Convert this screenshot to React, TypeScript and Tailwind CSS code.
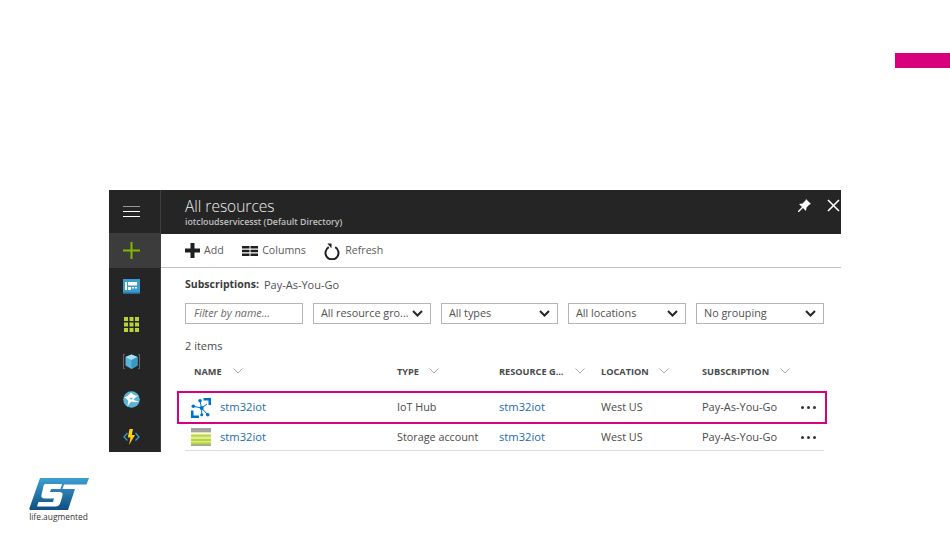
const rows = [
  { type: "IoT Hub", icon: "hub" },
  { type: "Storage account", icon: "storage" },
];

function Chevron() {
  return (
    <svg width="11" height="7" viewBox="0 0 11 7" className="shrink-0" fill="none" stroke="#262626" strokeWidth="2">
      <path d="M1 1l4.5 4.5L10 1" />
    </svg>
  );
}

function HeadArrow() {
  return (
    <svg width="10" height="6" viewBox="0 0 10 6" fill="none" stroke="#a0a0a0" strokeWidth="0.9">
      <path d="M0.5 0.5L5 5l4.500-4.500" />
    </svg>
  );
}

function Select({ label, width }: { label: string; width: string }) {
  return (
    <div className={`flex h-[21px] items-center justify-between border border-[#b4b4b4] pl-[7px] pr-[7px] text-[10.8px] text-[#4f4f4f] ${width}`}>
      <span className="whitespace-nowrap">{label}</span>
      <Chevron />
    </div>
  );
}

function HubIcon() {
  return (
    <svg width="20" height="20" viewBox="0 0 20 20">
      <path d="M12.500 0H20v7h-2.500V2.500h-5zM0 12.500h2.500V17.500H8V20H0z" fill="#0072c6" />
      <path d="M9 2.700l1.500 7.300M2.300 8.300l8.200 1.700M16 6l-5.500 4M16.700 16.700l-6.200-6.700M10.700 16.700V10" stroke="#0072c6" strokeWidth="1" />
      <g fill="#0072c6">
        <circle cx="9" cy="2.700" r="1.800" />
        <circle cx="2.300" cy="8.300" r="1.800" />
        <circle cx="10.700" cy="10" r="2" />
        <circle cx="16.700" cy="16.700" r="1.800" />
        <circle cx="10.700" cy="16.700" r="1.500" />
      </g>
    </svg>
  );
}

function StorageIcon() {
  return (
    <svg width="20" height="18" viewBox="0 0 20 18">
      <rect width="20" height="18" fill="#a3a3a3" />
      <rect y="4" width="20" height="12.500" fill="#b8d432" />
      <rect y="4.500" width="20" height="2" fill="#ffffff" />
      <rect y="8.500" width="20" height="2.500" fill="#dcea9c" />
      <rect y="13" width="20" height="1.500" fill="#dcea9c" />
    </svg>
  );
}

function Row({ type, icon, last }: { type: string; icon: string; last?: boolean }) {
  return (
    <div className={`grid h-[29px] grid-cols-[212px_102px_102px_101px_98px_1fr] items-center text-[10.8px] text-[#4a4a4a] ${last ? "border-b border-[#dcdcdc] pt-[2px]" : ""}`}>
      <div className="flex items-center gap-[9px] pl-[6px]">
        <span className="flex w-[20px] justify-center">{icon === "hub" ? <HubIcon /> : <StorageIcon />}</span>
        <span className="text-[11.2px] font-medium text-[#1a6bb5]">stm32iot</span>
      </div>
      <span className="whitespace-nowrap">{type}</span>
      <span className="text-[11.2px] font-medium text-[#1a6bb5]">stm32iot</span>
      <span>West US</span>
      <span className="whitespace-nowrap text-[11px]">Pay-As-You-Go</span>
      <span className="flex justify-end gap-[3px] pr-[8px]">
        <i className="h-[3px] w-[3px] rounded-full bg-[#333]" />
        <i className="h-[3px] w-[3px] rounded-full bg-[#333]" />
        <i className="h-[3px] w-[3px] rounded-full bg-[#333]" />
      </span>
    </div>
  );
}

function Sidebar() {
  return (
    <div className="flex w-[52px] shrink-0 flex-col border-r border-[#3e3e3e] bg-[#252525]">
      <div className="flex h-[43px] shrink-0 flex-col items-center justify-center gap-[3.7px] pr-[6px]">
        <i className="h-px w-[17px] bg-[#999]" />
        <i className="h-px w-[17px] bg-white" />
        <i className="h-px w-[17px] bg-white" />
      </div>
      <div className="flex h-[35px] shrink-0 items-center justify-center bg-[#3c3c3c] pr-[6px]">
        <svg width="17" height="17" viewBox="0 0 17 17" fill="#7fba00">
          <path d="M7.500 0h2v7.500H17v2H9.500V17h-2V9.500H0v-2h7.500z" />
        </svg>
      </div>
      <div className="flex h-[37.5px] shrink-0 items-center justify-center pr-[6px]">
        <svg width="17" height="15" viewBox="0 0 17 15">
          <rect width="17" height="15" fill="#3a9bd0" />
          <rect y="13.500" width="17" height="1.500" fill="#27688c" />
          <path d="M2 3h2v8H2zM5 3h9v3.500H5zM5 8h3v3H5zM9 8h2v1.500H9zM12 8h2v1.500h-2z" fill="#ffffff" />
        </svg>
      </div>
      <div className="flex h-[37.5px] shrink-0 items-center justify-center pr-[6px]">
        <svg width="15" height="15" viewBox="0 0 15 15" fill="#b8d432">
          <path d="M0 0h4v4H0zM5.500 0h4v4h-4zM11 0h4v4h-4zM0 5.500h4v4H0zM5.500 5.500h4v4h-4zM11 5.500h4v4h-4zM0 11h4v4H0zM5.500 11h4v4h-4zM11 11h4v4h-4z" />
        </svg>
      </div>
      <div className="flex h-[37.5px] shrink-0 items-center justify-center pr-[6px]">
        <svg width="17" height="15" viewBox="0 0 17 15">
          <path d="M2 .500H.500v14H2M15 .500h1.500v14H15" fill="none" stroke="#777" strokeWidth="0.800" />
          <path d="M8.500 0.500L14.500 3v8.500L8.500 15l-6-3.500V3z" fill="#59b4d9" />
          <path d="M2.500 3l6 3 6-3-6-2.500z" fill="#a5e0f5" />
          <path d="M8.500 6v9l6-3.500V3z" fill="#3999c6" />
        </svg>
      </div>
      <div className="flex h-[37.5px] shrink-0 items-center justify-center pr-[6px]">
        <svg width="17" height="17" viewBox="0 0 17 17">
          <circle cx="8.500" cy="8.500" r="8.300" fill="#59b4d9" />
          <path d="M1 6.500C4 6 6 4 8 1.500c2 2.500 4.500 3.500 7.500 3C13 6 11.500 7 10.500 8.500c2 1.500 4 2 6 1.500-3 1.500-5.500 1.500-8 .5-2 1.500-3.500 3.500-4 6 0-2.500.5-5 1-6.500C4.500 8.500 3 7 1 6.500z" fill="#ffffff" />
          <path d="M6.500 7.500C7.800 6.500 9 6.700 10 7.800 8.800 8.800 7.500 8.800 6.500 7.500z" fill="#59b4d9" />
        </svg>
      </div>
      <div className="flex h-[37.5px] shrink-0 items-center justify-center pr-[6px]">
        <svg width="17" height="16" viewBox="0 0 17 16">
          <path d="M4.500 4L1 8l3.500 3.500M12.500 4L16 8l-3.500 3.500" fill="none" stroke="#3999c6" strokeWidth="1.300" />
          <path d="M10 0H6.500L4.800 8.500h2.700L6 16l6-10H8.800z" fill="#fcd116" />
        </svg>
      </div>
    </div>
  );
}

function StLogo() {
  return (
    <svg width="60" height="33" viewBox="0 0 60 33">
      <defs>
        <linearGradient id="st" x1="0" y1="0" x2="0" y2="1">
          <stop offset="0" stopColor="#3d9fd3" />
          <stop offset="1" stopColor="#0f4f80" />
        </linearGradient>
      </defs>
      {/* blue field, the T bar and stem are left open to the page */}
      <path d="M11 0h49l-2.500 6.500H35L33.500 11H46L39 32H2c-1 0-2-.5-1.500-2L11 0z" fill="url(#st)" />
      <path d="M16.500 6H33L31.500 11H22l-1 3h9.500c2.500 0 3.500 1.500 3 3.500l-2 7c-.8 2.500-2.500 4-5 4H8l1.500-4.500H24l1-3.500H15.500c-2.500 0-3.500-1.500-3-3.500L14.500 8c.3-1.200 1-2 2-2z" fill="#ffffff" />
    </svg>
  );
}

export default function App() {
  return (
    <div className="relative h-[535px] w-[950px] overflow-hidden bg-white font-['Open_Sans','Noto_Sans',sans-serif]">
      <div className="flex justify-end pt-[53px]">
        <div className="h-[15px] w-[55px] bg-[#d9007e]" />
      </div>

      <div className="ml-[109px] mt-[122px] flex h-[262px] w-[732px] overflow-hidden">
        <Sidebar />
        <div className="relative min-w-0 flex-1">
          <div className="flex h-[44px] items-start justify-between bg-[#252525] pl-[24px] pr-[1px]">
            <div className="pt-[5px]">
              <div className="text-[15.5px] font-light leading-[22px] text-[#f0f0f0]">All resources</div>
              <div className="text-[8.8px] font-semibold leading-[11px] text-[#c0c0c0]">iotcloudservicesst (Default Directory)</div>
            </div>
            <div className="flex items-center gap-[16px] pt-[9px]">
              <svg width="13" height="13" viewBox="0 0 13 13" fill="#ffffff">
                <path d="M8 0l5 5-1.500.5-3 3L8 12 5 9l-4 4-1 0 0-1 4-4-3-3 3.500-.5 3-3z" />
              </svg>
              <svg width="13" height="13" viewBox="0 0 13 13" stroke="#ffffff" strokeWidth="1.600">
                <path d="M1 1l11 11M12 1L1 12" />
              </svg>
            </div>
          </div>

          <div className="flex h-[34px] items-center gap-[18.5px] border-b border-[#c0c0c0] pl-[24px] pt-[1px] text-[10.6px] text-[#5a5a5a]">
            <span className="flex items-center gap-[4px]">
              <svg width="15" height="15" viewBox="0 0 15 15" fill="#1f1f1f"><path d="M5.500 0h4v5.500H15v4H9.500V15h-4V9.500H0v-4h5.500z" /></svg>
              Add
            </span>
            <span className="flex items-center gap-[4px]">
              <svg width="16" height="10" viewBox="0 0 16 10" fill="#1f1f1f"><path d="M0 0h7.500v2.500H0zM8.500 0H16v2.500H8.500zM0 3.750h7.500v2.500H0zM8.500 3.750H16v2.500H8.500zM0 7.500h7.500V10H0zM8.500 7.500H16V10H8.500z" /></svg>
              Columns
            </span>
            <span className="flex items-center gap-[5px]">
              <svg width="16" height="17" viewBox="0 0 16 17" fill="none">
                <path d="M4.800 4.200a6.500 6.500 0 1 0 6.400 0" stroke="#1f1f1f" strokeWidth="2" />
                <path d="M3.500 0.500h4v5z" fill="#1f1f1f" />
              </svg>
              Refresh
            </span>
          </div>

          <div className="pl-[24px] pr-[17px]">
            <div className="flex h-[34px] items-center gap-[5px] text-[10.5px] text-[#4f4f4f]">
              <span className="font-bold text-[#3a3a3a]">Subscriptions:</span>
              <span className="text-[11px]">Pay-As-You-Go</span>
            </div>
            <div className="mt-[1px] flex gap-[10px]">
              <div className="flex h-[21px] w-[118px] items-center border border-[#b4b4b4] pl-[8px] text-[10.8px] italic text-[#6a6a6a]">Filter by name...</div>
              <Select label="All resource gro..." width="w-[118px]" />
              <Select label="All types" width="w-[117px]" />
              <Select label="All locations" width="w-[118px]" />
              <Select label="No grouping" width="w-[128px]" />
            </div>
            <div className="mt-[14px] text-[11px] leading-[16px] text-[#4a4a4a]">2 items</div>
            <div className="mt-[9px] grid h-[17px] grid-cols-[212px_102px_102px_101px_98px_1fr] items-center text-[9.2px] font-bold text-[#4a4a4a]">
              <span className="flex items-center gap-[11px] pl-[9px]">NAME <HeadArrow /></span>
              <span className="flex items-center gap-[10px]">TYPE <HeadArrow /></span>
              <span className="flex items-center gap-[11px] whitespace-nowrap">RESOURCE G... <HeadArrow /></span>
              <span className="flex items-center gap-[10px]">LOCATION <HeadArrow /></span>
              <span className="flex items-center gap-[11px]">SUBSCRIPTION <HeadArrow /></span>
            </div>
            <div className="mt-[13px]">
              <Row type={rows[0].type} icon={rows[0].icon} />
              <Row type={rows[1].type} icon={rows[1].icon} last />
            </div>
          </div>

          <div className="absolute left-[16px] top-[201px] h-[33px] w-[650px] border-2 border-[#d9007e]" />
        </div>
      </div>

      <div className="ml-[28px] mt-[26px] flex w-[61px] flex-col items-center">
        <StLogo />
        <div className="mt-[1px] text-[8.4px] leading-[10px] text-[#333]">life.augmented</div>
      </div>
    </div>
  );
}
